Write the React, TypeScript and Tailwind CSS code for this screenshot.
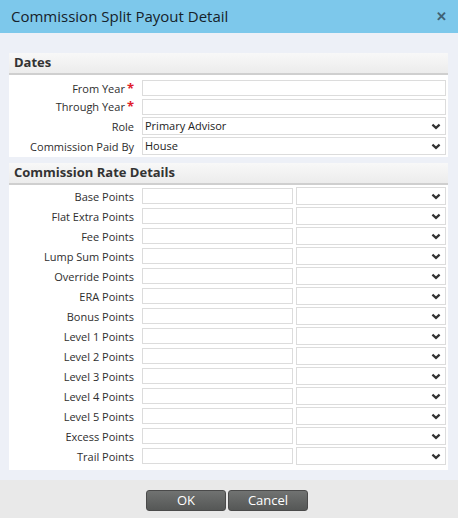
// Commission Split Payout Detail — modal dialog

const FONT = { fontFamily: '"Open Sans", "Liberation Sans", sans-serif' };

const RATE_ROWS = [
  'Base Points',
  'Flat Extra Points',
  'Fee Points',
  'Lump Sum Points',
  'Override Points',
  'ERA Points',
  'Bonus Points',
  'Level 1 Points',
  'Level 2 Points',
  'Level 3 Points',
  'Level 4 Points',
  'Level 5 Points',
  'Excess Points',
  'Trail Points',
];

function Chevron() {
  return (
    <svg width="10" height="7" viewBox="0 0 10 7" className="shrink-0">
      <path d="M1.4 1.6 L5 4.9 L8.6 1.6" fill="none" stroke="#333" strokeWidth="2.2" />
    </svg>
  );
}

function FakeSelect({ value, className }: { value?: string; className?: string }) {
  return (
    <div
      className={`h-[18px] flex items-center justify-between border border-[#dcdcdc] bg-white pl-[2px] pr-[4px] text-[11px] text-[#222] ${className ?? ''}`}
    >
      <span>{value}</span>
      <Chevron />
    </div>
  );
}

function Label({ text, required }: { text: string; required?: boolean }) {
  return (
    <div className="w-[125px] shrink-0 text-right text-[11px] text-[#2e2e2e] leading-none whitespace-nowrap">
      {text}
      {required && <span className="text-[#e0202a] font-bold text-[13px] ml-[2px]">*</span>}
    </div>
  );
}

function PanelHeader({ title }: { title: string }) {
  return (
    <div className="h-[22px] flex items-center px-[5px] bg-gradient-to-b from-[#f8f8f8] to-[#ececec] border-b-2 border-[#cfcfcf] text-[13px] font-bold text-[#333]">
      {title}
    </div>
  );
}

export default function App() {
  return (
    <div className="w-[458px] h-[518px] flex flex-col bg-[#e9e9e9] overflow-hidden" style={FONT}>
      {/* Barra de título */}
      <div className="h-[33px] shrink-0 flex items-center justify-between bg-[#7dc8eb] pl-[11px] pr-[11px]">
        <span className="text-[15px] text-[#16222a]">Commission Split Payout Detail</span>
        <span className="text-[13px] font-bold text-[#3f6173] leading-none">✕</span>
      </div>

      {/* Corpo */}
      <div className="h-[447px] shrink-0 bg-[#edf0f7] pl-[9px] pr-[10px] pt-[20px]">
        {/* Datas */}
        <div className="bg-white pb-[1px]">
          <PanelHeader title="Dates" />
          <div className="flex flex-col pt-[4px] pr-[2px]">
            <div className="h-[18px] flex items-center gap-[8px]">
              <Label text="From Year" required />
              <div className="flex-1 h-[16px] border border-[#dcdcdc]" />
            </div>
            <div className="h-[19px] flex items-center gap-[8px]">
              <Label text="Through Year" required />
              <div className="flex-1 h-[16px] border border-[#dcdcdc]" />
            </div>
            <div className="h-[20px] flex items-center gap-[8px]">
              <Label text="Role" />
              <FakeSelect value="Primary Advisor" className="flex-1" />
            </div>
            <div className="h-[20px] flex items-center gap-[8px]">
              <Label text="Commission Paid By" />
              <FakeSelect value="House" className="flex-1" />
            </div>
          </div>
        </div>

        {/* Taxas */}
        <div className="bg-white mt-[6px] pb-[4px]">
          <PanelHeader title="Commission Rate Details" />
          <div className="flex flex-col pt-[1px] pr-[2px]">
            {RATE_ROWS.map((r) => (
              <div key={r} className="h-[20px] flex items-center gap-[8px]">
                <Label text={r} />
                <div className="w-[151px] h-[16px] border border-[#dcdcdc]" />
                <FakeSelect className="flex-1 ml-[-5px]" />
              </div>
            ))}
          </div>
        </div>
      </div>

      {/* Botões */}
      <div className="flex-1 flex justify-center items-start pt-[10px] pr-[4px] gap-[2px]">
        <button className="w-[80px] h-[21px] rounded-[3px] bg-gradient-to-b from-[#717372] to-[#555756] border border-[#4a4a4a] text-white text-[13px] leading-none">
          OK
        </button>
        <button className="w-[80px] h-[21px] rounded-[3px] bg-gradient-to-b from-[#717372] to-[#555756] border border-[#4a4a4a] text-white text-[13px] leading-none">
          Cancel
        </button>
      </div>
    </div>
  );
}
